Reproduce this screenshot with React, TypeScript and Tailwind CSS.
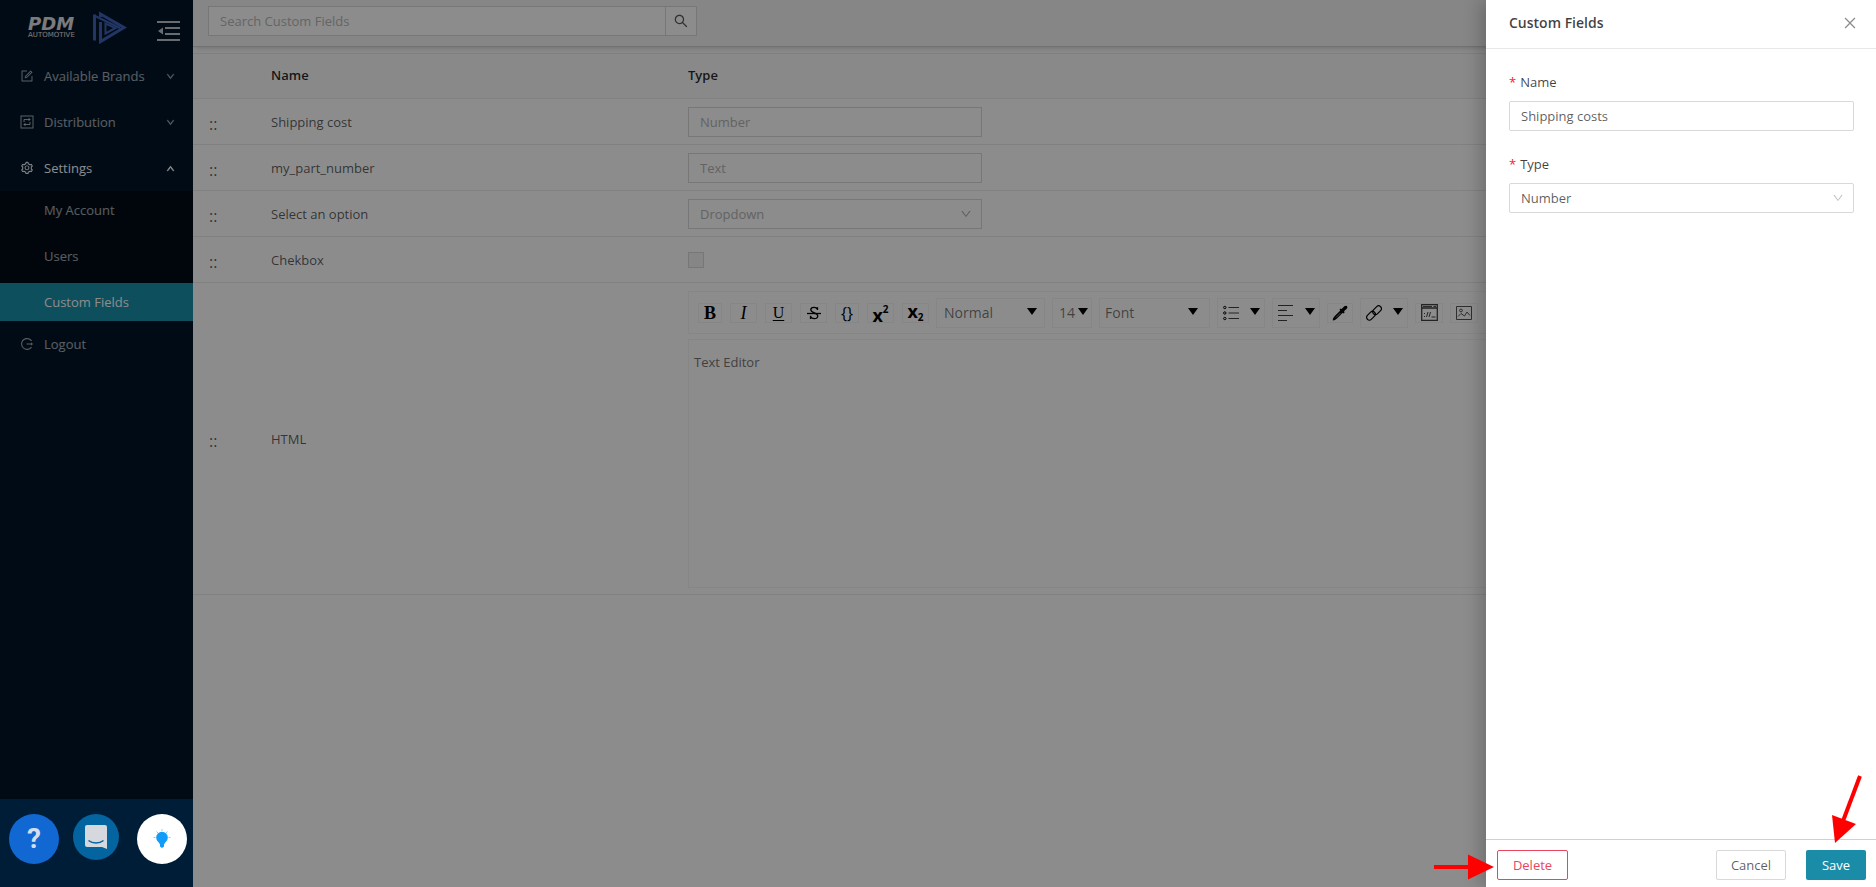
import { useState, type ReactNode } from 'react'
import clsx from 'clsx'
import {
  AiOutlineClose,
  AiOutlineDown,
  AiOutlineForm,
  AiOutlineLogout,
  AiOutlineSearch,
  AiOutlineSetting,
  AiOutlineUp,
} from 'react-icons/ai'

export default function App() {
  return (
    <div className="relative flex h-screen overflow-hidden bg-white font-['Open_Sans',sans-serif] text-[13px] leading-5 text-black/65">
      <Sidebar />
      <main className="flex min-w-0 flex-1 flex-col">
        <SearchBar />
        <FieldsTable />
      </main>
      <div className="absolute inset-0 bg-black/45" />
      <HelpBar />
      <FieldDrawer />
      <Arrows />
    </div>
  )
}

const Sidebar = () => (
  <nav className="flex w-[193px] shrink-0 flex-col bg-[#001529] text-white/65">
    <div className="flex h-[53px] items-center pt-[3px] pr-[13px] pl-7">
      <Logo />
      <button aria-label="Collapse menu" className="mt-[6px] ml-auto text-[#c0c4c8]">
        <svg viewBox="0 0 23 20" className="h-5 w-[23px]" fill="currentColor">
          <path d="M0 0h23v2H0ZM8 6h15v2H8ZM8 12h15v2H8ZM0 18h23v2H0ZM6 6.500v7L1 10Z" />
        </svg>
      </button>
    </div>
    <MenuTitle icon={<AiOutlineForm />} label="Available Brands" />
    <MenuTitle icon={<DistributionIcon />} label="Distribution" />
    <MenuTitle icon={<AiOutlineSetting />} label="Settings" open />
    <div className="flex flex-col gap-2 bg-[#000c17]">
      <SubItem label="My Account" />
      <SubItem label="Users" />
      <SubItem label="Custom Fields" active />
    </div>
    <a href="#logout" className="mt-1 flex h-[38px] items-center gap-[10px] pl-5">
      <AiOutlineLogout className="size-[14px]" />
      Logout
    </a>
  </nav>
)

interface MenuTitleProps {
  icon: ReactNode
  label: string
  open?: boolean
}

const MenuTitle = ({ icon, label, open }: MenuTitleProps) => (
  <button
    aria-expanded={!!open}
    className={clsx(
      'flex h-[46px] items-center gap-[10px] pr-[18px] pl-5 text-left [&>svg]:size-[14px]',
      open && 'text-white'
    )}
  >
    {icon}
    <span className="flex-1">{label}</span>
    <span className="[&>svg]:size-[9px] [&>svg]:stroke-[90]">
      {open ? <AiOutlineUp /> : <AiOutlineDown className="opacity-75" />}
    </span>
  </button>
)

const SubItem = ({ label, active }: { label: string; active?: boolean }) => (
  <a
    href="#settings"
    className={clsx(
      'flex h-[38px] items-center pl-11',
      active && 'bg-[#1890a8] text-white'
    )}
  >
    {label}
  </a>
)

const Logo = () => (
  <div className="flex items-center gap-[9px] font-['DejaVu_Sans',sans-serif]">
    <div className="flex w-14 flex-col text-[#e0e0e0]">
      <span className="text-lg leading-[14px] font-bold italic">PDM</span>
      <span className="text-[7px] leading-[8px]">AUTOMOTIVE</span>
    </div>
    <svg viewBox="0 0 34 34" className="size-[34px]" fill="none" stroke="#3f62b8">
      <path d="M1.500 3.500v26" strokeWidth="3" />
      <path d="M1 4.500 27 17" strokeWidth="2" />
      <path d="M7.500 6V3L31 16.500 7.500 30.500V11" strokeWidth="3" />
      <path d="M12.500 12.500v10l10-5.500Z" strokeWidth="2" />
    </svg>
  </div>
)

const DistributionIcon = () => (
  <svg viewBox="0 0 14 14" fill="none" stroke="currentColor">
    <rect x="1" y="1" width="12" height="12" />
    <path d="M4 7V4.500h6M10 7v2.500H4M8.500 3l1.500 1.500L8.500 6M5.500 8 4 9.500 5.500 11" />
  </svg>
)

const SearchBar = () => (
  <header className="relative flex h-[47px] shrink-0 border-b border-[#d0d0d0] bg-[#f4f4f4] pt-[6px] pl-[15px] shadow-md">
    <input
      aria-label="Search Custom Fields"
      placeholder="Search Custom Fields"
      className="h-[30px] w-[458px] border border-[#d9d9d9] bg-white px-[11px] placeholder:text-[#b8b8b8]"
    />
    <button
      aria-label="Search"
      className="-ml-px flex h-[30px] w-8 items-center justify-center border border-[#d9d9d9] bg-white"
    >
      <AiOutlineSearch className="size-4" />
    </button>
  </header>
)

const FieldsTable = () => (
  <table className="mt-[6px] w-full table-fixed border-separate border-spacing-0 text-left">
    <colgroup>
      <col className="w-[70px]" />
      <col className="w-[417px]" />
      <col />
    </colgroup>
    <thead className="bg-[#fafafa] text-black/85">
      <tr>
        <th className="h-[46px] border-y border-[#ebebeb]" />
        <th className="border-y border-[#ebebeb] px-2 pb-[2px] font-semibold">Name</th>
        <th className="border-y border-[#ebebeb] px-2 pb-[2px] font-semibold">Type</th>
      </tr>
    </thead>
    <tbody>
      <Row name="Shipping cost">
        <input aria-label="Shipping cost" placeholder="Number" className={disabledBox} disabled />
      </Row>
      <Row name="my_part_number">
        <input aria-label="my_part_number" placeholder="Text" className={disabledBox} disabled />
      </Row>
      <Row name="Select an option">
        <div className="relative w-[294px]">
          <select aria-label="Select an option" className={disabledBox} disabled>
            <option>Dropdown</option>
          </select>
          <AiOutlineDown className="absolute top-[9px] right-[10px] size-3 text-black/35" />
        </div>
      </Row>
      <Row name="Chekbox">
        <input
          type="checkbox"
          aria-label="Chekbox"
          className="block size-4 appearance-none border border-[#d9d9d9] bg-[#f5f5f5]"
          disabled
        />
      </Row>
      <Row name="HTML">
        <Editor />
      </Row>
    </tbody>
  </table>
)

const disabledBox =
  'block h-[30px] w-[294px] appearance-none border border-[#d9d9d9] bg-white px-[11px] text-[#b4b4b4] opacity-100 placeholder:text-[#b4b4b4]'

const Row = ({ name, children }: { name: string; children: ReactNode }) => (
  <tr>
    <td className="h-[46px] border-b border-[#ebebeb] pt-1 pl-4 text-base">::</td>
    <td className="border-b border-[#ebebeb] px-2">{name}</td>
    <td className="border-b border-[#ebebeb] px-2">{children}</td>
  </tr>
)

const Editor = () => (
  <div className="mt-2 mb-[6px]">
    <div className="mb-[5px] flex h-[43px] items-center gap-[7px] overflow-hidden border border-[#f4f4f4] pl-[9px] text-black">
      <div className="flex gap-2">
        <Tool label="Bold" className="w-6">
          <b className="font-['Liberation_Serif',serif] text-lg">B</b>
        </Tool>
        <Tool label="Italic" className="w-[27px]">
          <i className="font-['Liberation_Serif',serif] text-lg">I</i>
        </Tool>
        <Tool label="Underline" className="w-[27px]">
          <u className="font-['Liberation_Serif',serif] text-base underline-offset-2">U</u>
        </Tool>
        <Tool label="Strikethrough" className="w-[27px]">
          <svg viewBox="0 0 16 16" className="size-4" fill="none" stroke="currentColor">
            <path d="M1 8.500h14" strokeWidth="1.300" />
            <path
              d="M11.500 5V2.200M11.500 4.500C10.800 1.500 4.800 1.500 4.800 4.800c0 3.400 7 2.800 7 6.200 0 3.600-6.500 3.300-7.300.2M4.500 14v-3.200"
              strokeWidth="1.300"
            />
          </svg>
        </Tool>
        <Tool label="Monospace" className="w-6">
          <span className="text-base">{'{}'}</span>
        </Tool>
        <Tool label="Superscript" className="w-[27px]">
          <b className="mt-1 text-lg leading-none">x</b>
          <b className="mb-2 text-[10px]">2</b>
        </Tool>
        <Tool label="Subscript" className="w-[27px]">
          <b className="mb-1 text-lg leading-none">x</b>
          <b className="mt-2 text-[10px]">2</b>
        </Tool>
      </div>
      <ToolSelect label="Block type" value="Normal" className="w-[109px] pl-[7px]" arrow="right-2" />
      <ToolSelect label="Font size" value="14" className="w-10 pl-[6px]" arrow="right-1" />
      <ToolSelect label="Font" value="Font" className="w-[111px] pl-[5px]" arrow="right-3" />
      <ToolMenu label="List">
        <svg viewBox="0 0 16 16" className="size-4" fill="none" stroke="currentColor">
          <path d="M5.500 2.500H16M5.500 8H16M5.500 13.500H16" strokeOpacity=".75" />
          <circle cx="1.800" cy="2.500" r="1.200" />
          <circle cx="1.800" cy="8" r="1.200" />
          <circle cx="1.800" cy="13.500" r="1.200" />
        </svg>
      </ToolMenu>
      <ToolMenu label="Align">
        <svg viewBox="0 0 16 16" className="size-4" fill="none" stroke="currentColor" strokeOpacity=".75">
          <path d="M0 .500h15M0 5.500h9M0 10.500h15M0 15.500h9" />
        </svg>
      </ToolMenu>
      <Tool label="Color" className="w-[26px]">
        <svg viewBox="0 0 16 16" className="size-4" fill="currentColor">
          <path
            d="M.8 15.500c0-2.200.8-3.400 2-4.600L8.300 5.400 7.500 4.600l1.200-1.200 1 .7L12.300 1.300c2-1.800 4.200.4 2.400 2.400L12 6.300l.7 1-1.200 1.200-.8-.8-5.500 5.500c-1.200 1.200-2.200 2-4.400 2.300Z"
          />
          <path d="m4 12.500 4.500-4.500" stroke="#fff" strokeWidth=".6" />
        </svg>
      </Tool>
      <ToolMenu label="Link">
        <svg viewBox="0 0 16 16" className="size-4" fill="none" stroke="currentColor" strokeWidth="1.200">
          <rect x="6" y="2.500" width="10" height="5.500" rx="2.700" transform="rotate(-45 11 5.200)" />
          <rect x="0" y="8" width="10" height="5.500" rx="2.700" transform="rotate(-45 5 10.800)" />
        </svg>
      </ToolMenu>
      <Tool label="Embedded" className="w-7">
        <svg viewBox="0 0 17 17" className="size-[17px]" fill="none" stroke="currentColor" strokeOpacity=".75">
          <path d="M.7.700h15.600v15.600H.7ZM.7 4h15.600" strokeWidth="1.300" />
          <path d="M2 2.400h9M12.500 2.400h2.500" />
          <path d="m5.500 13 1.500-5M8 13l1.500-5M3 9.500h1M3 12.500h1M10.500 13h4" />
        </svg>
      </Tool>
      <Tool label="Image" className="w-7">
        <svg viewBox="0 0 16 14" className="h-[14px] w-4" fill="none" stroke="#555">
          <path d="M.500.500h15v13H.500Z" />
          <circle cx="5" cy="4.500" r="1.400" />
          <path d="M2 10.500 5 7.500 8.500 10 11 6l3 3.500" />
        </svg>
      </Tool>
    </div>
    <div className="h-[249px] border border-[#f4f4f4] px-[5px] py-3 text-[#777]">Text Editor</div>
  </div>
)

interface ToolProps {
  label: string
  className?: string
  children: ReactNode
}

const Tool = ({ label, className, children }: ToolProps) => (
  <button
    aria-label={label}
    className={clsx(
      'flex h-5 shrink-0 items-center justify-center border border-[#f4f4f4] leading-none',
      className
    )}
  >
    {children}
  </button>
)

const ToolMenu = ({ label, children }: ToolProps) => (
  <button
    aria-label={label}
    className="flex h-[30px] w-12 shrink-0 items-center justify-between border border-[#f4f4f4] pr-1 pl-[5px]"
  >
    {children}
    <Caret />
  </button>
)

interface ToolSelectProps {
  label: string
  value: string
  className: string
  arrow: string
}

const ToolSelect = ({ label, value, className, arrow }: ToolSelectProps) => (
  <div className="relative flex shrink-0 items-center">
    <select
      aria-label={label}
      className={clsx(
        'h-[30px] appearance-none border border-[#f4f4f4] text-sm text-black/55',
        className
      )}
    >
      <option>{value}</option>
    </select>
    <span className={clsx('pointer-events-none absolute', arrow)}>
      <Caret />
    </span>
  </div>
)

const Caret = () => (
  <svg viewBox="0 0 10 7" className="mb-[2px] h-[7px] w-[10px]" fill="currentColor">
    <path d="M0 0h10L5 7Z" />
  </svg>
)

const HelpBar = () => (
  <div className="absolute bottom-0 left-0 flex h-[88px] w-[193px] items-center justify-between bg-[#001d38] pr-[6px] pb-[9px] pl-[9px]">
    <button
      aria-label="Help"
      className="flex size-[50px] items-center justify-center rounded-full bg-[#1268d3] font-['Roboto',sans-serif] text-[28px] font-bold text-[#d3dff0]"
    >
      ?
    </button>
    <button
      aria-label="Chat"
      className="mr-1 mb-1 flex size-[46px] items-center justify-center rounded-full bg-[#04649f]"
    >
      <svg viewBox="0 0 24 24" className="size-6">
        <path d="M3 0h18a2 2 0 0 1 2 2v22l-5-2H3a2 2 0 0 1-2-2V2a2 2 0 0 1 2-2Z" fill="#d5d8dc" />
        <path d="M4.500 15.500c4 3.300 11 3.300 15 0" fill="none" stroke="#04649f" strokeWidth="1.500" />
      </svg>
    </button>
    <button
      aria-label="Ideas"
      className="flex size-[50px] items-center justify-center rounded-full bg-white"
    >
      <svg viewBox="0 0 18 20" className="h-5 w-[18px]" fill="#109cf8">
        <circle cx="9" cy="8.500" r="5.800" />
        <path d="M4.500 11.500h9l-2.500 4v2l-2 1.500-2-1.500v-2Z" />
        <path
          d="M9 0v2M3.500 2.500 5 4M14.500 2.500 13 4M.500 8.500h2M15.500 8.500h2"
          stroke="#109cf8"
          strokeOpacity=".5"
        />
      </svg>
    </button>
  </div>
)

const FieldDrawer = () => {
  const [name, setName] = useState('Shipping costs')

  return (
    <aside className="absolute inset-y-0 right-0 flex w-[390px] flex-col bg-white shadow-[-6px_0_16px_rgba(0,0,0,0.2)]">
      <div className="flex h-[49px] items-center justify-between border-b border-[#e8e8e8] pr-[18px] pb-[3px] pl-[23px]">
        <h2 className="text-sm font-semibold text-black/75">Custom Fields</h2>
        <button aria-label="Close" className="text-black/45">
          <AiOutlineClose className="size-4" />
        </button>
      </div>
      <form className="flex flex-1 flex-col gap-[23px] pt-[23px] pr-[22px] pl-[23px]">
        <div>
          <Label id="field-name">Name</Label>
          <input
            id="field-name"
            value={name}
            onChange={(e) => setName(e.target.value)}
            className="block h-[30px] w-full rounded-xs border border-[#d9d9d9] px-[11px]"
          />
        </div>
        <div>
          <Label id="field-type">Type</Label>
          <div className="relative">
            <select
              id="field-type"
              className="block h-[30px] w-full appearance-none rounded-xs border border-[#d9d9d9] px-[11px]"
            >
              <option>Number</option>
            </select>
            <AiOutlineDown className="pointer-events-none absolute top-[9px] right-[10px] size-3 text-black/25" />
          </div>
        </div>
      </form>
      <div className="flex h-12 items-center gap-5 border-t border-[#d0d0d0] pt-[6px] pr-[10px] pb-1 pl-[11px]">
        <button className="mr-auto h-[30px] w-[71px] rounded-xs border border-[#e8455f] text-[#e8455f]">
          Delete
        </button>
        <button className="h-[30px] w-[70px] rounded-xs border border-[#d9d9d9]">Cancel</button>
        <button className="h-[30px] w-[60px] rounded-xs bg-[#1a8ca8] text-white">Save</button>
      </div>
    </aside>
  )
}

const Label = ({ id, children }: { id: string; children: ReactNode }) => (
  <label htmlFor={id} className="flex h-[29px] items-start gap-1 text-black/75">
    <span className="text-[#f5222d]">*</span>
    {children}
  </label>
)

// Red pointers at the Delete and Save buttons
const Arrows = () => (
  <svg
    viewBox="0 0 450 120"
    className="pointer-events-none absolute right-0 bottom-0 h-[120px] w-[450px]"
    fill="red"
    stroke="red"
  >
    <path d="M8 100h38" strokeWidth="4" />
    <path d="M42 87.500v25L68 100Z" stroke="none" />
    <path d="M434 9 417 54" strokeWidth="4" />
    <path d="M406 48l24 9-21 19Z" stroke="none" />
  </svg>
)
